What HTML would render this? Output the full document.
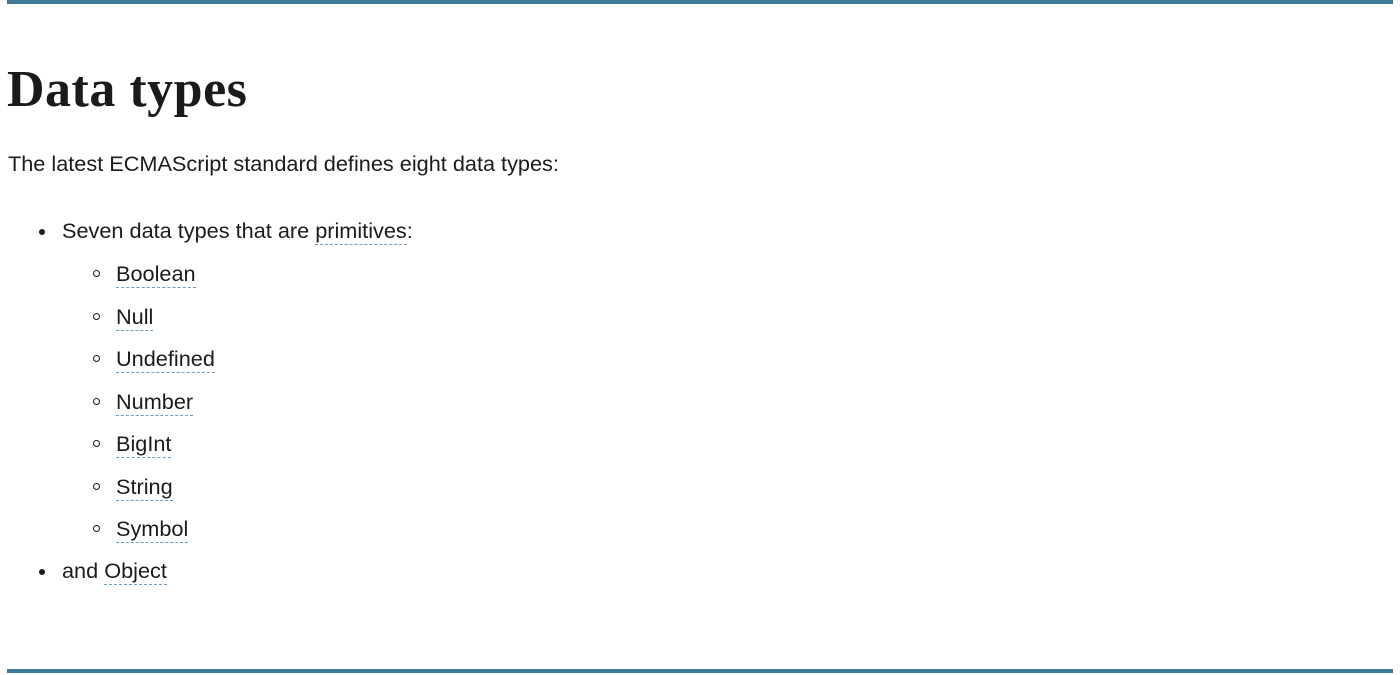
<!DOCTYPE html>
<html><head><style>
html,body{margin:0;padding:0;background:#fff;}
body{width:1400px;height:675px;position:relative;overflow:hidden;font-family:"Liberation Sans",Arial,sans-serif;color:#1b1b1b;}
.bar{position:absolute;left:7px;right:7px;height:4px;background:#3d7a9a;}
h1{position:absolute;left:7px;top:60px;margin:0;font-family:"Liberation Serif",serif;font-weight:bold;font-size:52px;line-height:60px;color:#1b1b1b;letter-spacing:0.5px;}
.t{position:absolute;font-size:21.7px;line-height:24px;white-space:nowrap;}
a{color:#1b1b1b;text-decoration:none;border-bottom:1.5px dashed #6d9fbd;padding-bottom:1px;}
.d{position:absolute;width:6px;height:6px;border-radius:50%;background:#1b1b1b;}
.c{position:absolute;width:5px;height:5px;border-radius:50%;border:1.3px solid #1b1b1b;}
</style></head><body>
<div class="bar" style="top:0"></div>
<h1>Data types</h1>
<div class="t" style="left:8px;top:152px">The latest ECMAScript standard defines eight data types:</div>
<div class="d" style="left:39px;top:229px"></div>
<div class="t" style="left:62px;top:219px">Seven data types that are <a>primitives</a>:</div>
<div class="c" style="left:93px;top:270px"></div><div class="t" style="left:116px;top:262px"><a>Boolean</a></div>
<div class="c" style="left:93px;top:313px"></div><div class="t" style="left:116px;top:305px"><a>Null</a></div>
<div class="c" style="left:93px;top:355px"></div><div class="t" style="left:116px;top:347px"><a>Undefined</a></div>
<div class="c" style="left:93px;top:398px"></div><div class="t" style="left:116px;top:390px"><a>Number</a></div>
<div class="c" style="left:93px;top:440px"></div><div class="t" style="left:116px;top:432px"><a>BigInt</a></div>
<div class="c" style="left:93px;top:483px"></div><div class="t" style="left:116px;top:475px"><a>String</a></div>
<div class="c" style="left:93px;top:525px"></div><div class="t" style="left:116px;top:517px"><a>Symbol</a></div>
<div class="d" style="left:39px;top:569px"></div>
<div class="t" style="left:62px;top:559px">and <a>Object</a></div>
<div class="bar" style="top:669px"></div>
</body></html>
